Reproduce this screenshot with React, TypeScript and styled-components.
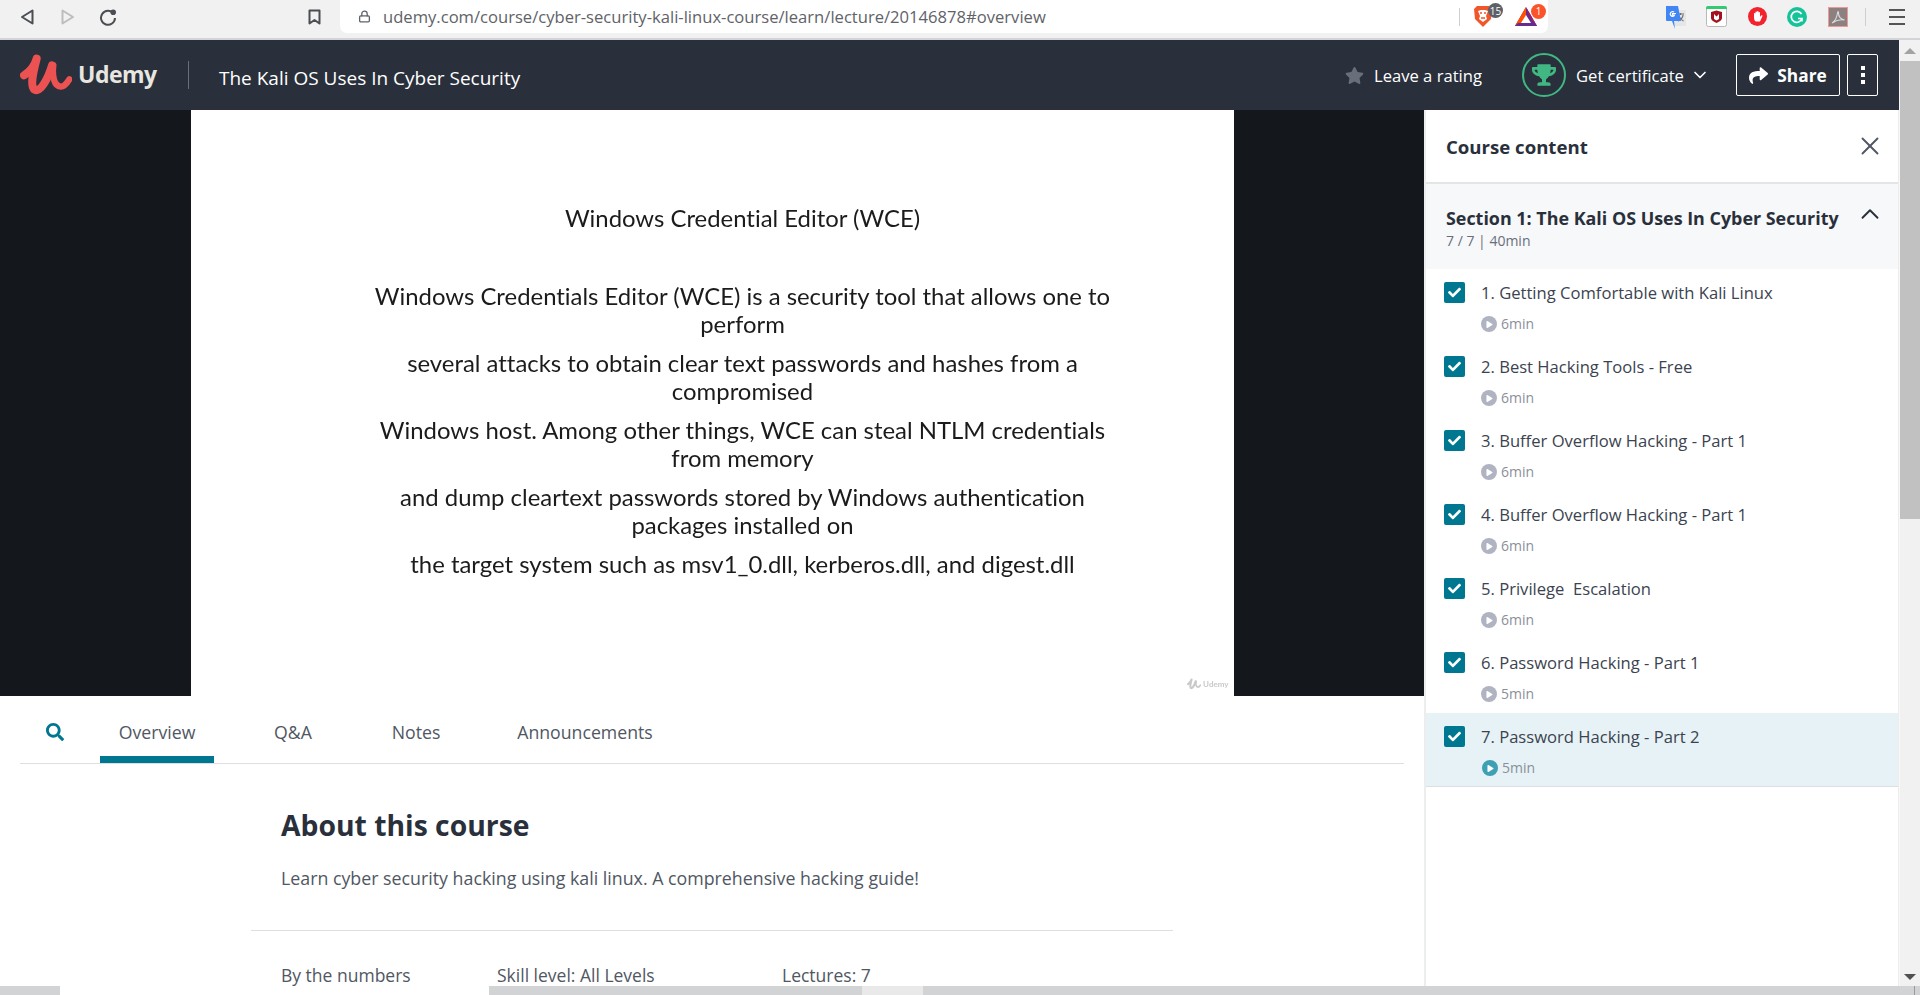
import React from "react";
import styled, { createGlobalStyle } from "styled-components";
import { FaStar, FaTrophy, FaShare, FaSearch, FaCheck, FaPlay } from "react-icons/fa";
import { ChevronDown, ChevronUp, X, Lock } from "lucide-react";

const Global = createGlobalStyle`
  html, body { margin: 0; padding: 0; height: 100%; overflow: hidden; background: #fff; }
  body { font-family: "Open Sans", "Liberation Sans", sans-serif; color: #29303b; }
  * { box-sizing: border-box; }
`;

const Frame = styled.div`display:flex;flex-direction:column;width:1920px;height:995px;overflow:hidden;`;

/* browser chrome */
const ChromeBar = styled.div`display:flex;align-items:flex-start;height:40px;flex:none;background:#f1f1f1;border-bottom:2px solid #d2d4d7;`;
const NavGroup = styled.div`display:flex;align-items:center;height:33px;width:340px;flex:none;padding-left:6px;`;
const NavSlot = styled.span<{ $w: number; $ml?: number }>`display:flex;align-items:center;justify-content:center;width:${p => p.$w}px;margin-left:${p => p.$ml ?? 0}px;`;
const Omnibox = styled.div`display:flex;align-items:center;width:1208px;height:33px;background:#fff;border-radius:0 0 7px 7px;padding-left:18px;flex:none;`;
const UrlText = styled.span`margin-left:12px;font-size:16.6px;color:#5f6368;white-space:nowrap;width:1076px;flex:none;`;
const Sep = styled.span`width:1px;height:18px;background:#cfcfcf;flex:none;`;
const ExtInBox = styled.div`position:relative;flex:none;display:flex;`;
const ExtBadge = styled.span<{ $bg: string; $left: number }>`position:absolute;top:-2px;left:${p => p.$left}px;width:15px;height:15px;border-radius:50%;background:${p => p.$bg};color:#fff;font-size:10px;display:flex;align-items:center;justify-content:center;`;
const ExtGroup = styled.div`display:flex;align-items:center;height:33px;flex:1;padding-left:117px;`;
const ExtItem = styled.span<{ $ml: number }>`display:flex;margin-left:${p => p.$ml}px;`;

/* page */
const Middle = styled.div`display:flex;flex:1;min-height:0;`;
const Page = styled.div`display:flex;flex-direction:column;width:1899px;flex:none;`;
const TopBar = styled.header`display:flex;align-items:center;height:70px;flex:none;background:#29303b;color:#fff;`;
const LogoWrap = styled.div`display:flex;align-items:center;margin-left:20px;width:168px;`;
const LogoText = styled.span`margin-left:6px;margin-top:-2px;font-size:23px;font-weight:700;letter-spacing:-.5px;color:#e8e6e1;`;
const BarDivider = styled.span`width:1px;height:28px;background:#686f7a;`;
const CourseTitle = styled.span`margin-left:30px;margin-top:6px;font-size:19px;width:1126px;white-space:nowrap;`;
const Rating = styled.div`display:flex;align-items:center;gap:10px;width:177px;font-size:16.6px;color:#fff;`;
const RatingStar = styled.span`display:flex;color:#686f7a;`;
const TrophyRing = styled.span`display:flex;align-items:center;justify-content:center;width:44px;height:44px;border:2.5px solid #41b883;border-radius:50%;color:#41b883;flex:none;`;
const Certificate = styled.span`display:flex;align-items:center;margin-left:10px;width:160px;font-size:16.6px;white-space:nowrap;`;
const CertChevron = styled.span`display:flex;margin-left:6px;`;
const ShareButton = styled.span`display:flex;align-items:center;justify-content:center;gap:9px;width:104px;height:42px;border:1px solid #fff;border-radius:2px;font-size:17.3px;font-weight:700;`;
const MoreButton = styled.span`display:flex;flex-direction:column;align-items:center;justify-content:center;gap:3px;width:31px;height:42px;margin-left:7px;border:1px solid #fff;border-radius:2px;`;
const MoreDot = styled.i`display:block;width:4px;height:4px;background:#fff;`;

const Body = styled.div`display:flex;flex:1;min-height:0;`;
const LeftCol = styled.main`display:flex;flex-direction:column;width:1424px;flex:none;overflow:hidden;`;
const Stage = styled.section`display:flex;justify-content:center;height:586px;flex:none;background:#14171c;`;
const Slide = styled.div`position:relative;width:1043px;background:#fff;padding:94px 0 0 152px;font-family:Lato,"Open Sans",sans-serif;font-variant-ligatures:none;color:#1b1b1b;text-align:center;font-size:23.9px;line-height:28px;filter:blur(.25px);`;
const SlideTitle = styled.div`width:800px;margin-bottom:50px;`;
const SlidePara = styled.div`width:800px;margin-bottom:11px;`;
const SlideLine = styled.div`white-space:nowrap;`;
const Watermark = styled.div`position:absolute;right:5px;bottom:5px;display:flex;align-items:center;gap:2px;font-size:8px;line-height:14px;font-weight:700;color:#c9c9c9;filter:blur(.7px);`;

const TabsBar = styled.nav`display:flex;align-items:stretch;height:68px;flex:none;margin:0 20px;border-bottom:1px solid #dedfe0;`;
const SearchTab = styled.span`display:flex;align-items:flex-start;padding:27px 0 0 26px;width:80px;color:#007791;`;
const Tab = styled.span<{ $active?: boolean; $w: number }>`display:flex;align-items:flex-start;justify-content:center;width:${p => p.$w}px;padding-top:24px;font-size:17.7px;line-height:24px;color:#505763;border-bottom:${p => (p.$active ? "7px solid #007791" : "0")};`;

const About = styled.section`display:flex;flex-direction:column;margin-left:251px;width:922px;`;
const AboutHead = styled.h2`margin:40px 0 0 30px;font-size:28.3px;line-height:42px;font-weight:700;color:#29303b;`;
const AboutDesc = styled.p`margin:20px 0 0 30px;font-size:17.8px;line-height:24px;color:#505763;`;
const AboutRule = styled.hr`margin:40px 0 0;border:0;border-top:1px solid #dedfe0;height:0;`;
const Numbers = styled.div`display:flex;margin:32px 0 0 30px;font-size:17.5px;line-height:24px;color:#505763;`;
const NumCell = styled.span<{ $w: number }>`width:${p => p.$w}px;flex:none;`;

const Sidebar = styled.aside`display:flex;flex-direction:column;width:475px;flex:none;background:#fff;border-left:2px solid #eceded;border-right:1px solid #eceded;`;
const SideHead = styled.div`display:flex;align-items:center;justify-content:space-between;height:74px;flex:none;padding:0 20px;border-bottom:2px solid #e4e5e6;`;
const SideTitle = styled.span`font-size:18.6px;font-weight:700;color:#29303b;`;
const CloseBtn = styled.span`display:flex;color:#505763;margin-right:-7px;`;
const Section = styled.div`display:flex;justify-content:space-between;height:85px;flex:none;padding:22px 20px 0;background:#f7f8fa;`;
const SectionTitle = styled.div`font-size:17.9px;line-height:24px;font-weight:700;color:#29303b;white-space:nowrap;`;
const SectionMeta = styled.div`margin-top:2px;font-size:14px;line-height:17px;color:#686f7a;`;
const SectionChevron = styled.span`display:flex;color:#29303b;margin:-7px -7px 0 0;height:30px;`;
const Row = styled.div<{ $active?: boolean }>`display:flex;height:74px;flex:none;padding:13px 0 0 18px;background:${p => (p.$active ? "#e6f2f5" : "#fff")};border-bottom:${p => (p.$active ? "1px solid #dedfe0" : "0")};`;
const Check = styled.span`display:flex;align-items:center;justify-content:center;width:21px;height:21px;border-radius:2px;background:#007791;color:#fff;flex:none;`;
const RowBody = styled.div`margin-left:16px;margin-top:-1px;`;
const RowTitle = styled.div`font-size:16.6px;line-height:24px;color:#3c4350;white-space:pre;`;
const RowMeta = styled.div<{ $active?: boolean }>`display:flex;align-items:center;gap:4px;margin:9px 0 0 ${p => (p.$active ? 1 : 0)}px;font-size:14px;line-height:20px;color:#8a8f99;`;
const PlayDisc = styled.span<{ $active?: boolean }>`display:flex;align-items:center;justify-content:center;width:16px;height:16px;border-radius:50%;background:${p => (p.$active ? "#3f9fb3" : "#b0b4c2")};color:#fff;padding-left:1px;`;

const PageScroll = styled.div`display:flex;flex-direction:column;align-items:stretch;width:21px;flex:none;background:#f1f1f1;border-left:1px solid #f8f8f8;`;
const ScrollArrow = styled.span<{ $down?: boolean }>`display:block;align-self:center;margin:${p => (p.$down ? "auto 0 6px" : "8px 0 6px")};width:0;height:0;border-left:6px solid transparent;border-right:6px solid transparent;${p => (p.$down ? "border-top:6px solid #505050;" : "border-bottom:6px solid #a3a3a3;")}`;
const ScrollThumb = styled.span`display:block;height:458px;margin-top:1px;background:#c1c1c1;`;

/* task strip */
const Strip = styled.footer`display:flex;height:9px;flex:none;background:#d2d3d5;overflow:hidden;`;
const StripWhite = styled.span`width:429px;margin-left:60px;background:#fff;flex:none;`;
const StripPale = styled.span`width:61px;margin-left:373px;background:#e9e9e9;flex:none;`;
const StripClock = styled.span`margin-left:869px;width:122px;font-size:13px;line-height:13px;padding-top:7px;color:#111;flex:none;`;
const StripLine = styled.span`width:1px;background:#9a9a9a;flex:none;`;

const Burger = styled.span`display:flex;flex-direction:column;gap:5px;width:16px;margin-left:23px;`;
const BurgerBar = styled.i`display:block;height:2px;background:#555;`;

const UdemyMark = ({ w = 52, h = 42, c = "#ec5252" }: { w?: number; h?: number; c?: string }) => (
  <svg width={w} height={h} viewBox="28 26 156 126" fill="none" stroke={c} strokeWidth="24" strokeLinecap="round" strokeLinejoin="round">
    <path d="M40 90C56 80 72 62 78 40C68 78 58 118 70 132C88 146 112 100 124 60" />
    <path d="M128 60C124 92 130 122 150 124C162 124 170 112 176 102" strokeWidth="19" />
  </svg>
);

const NavTriangle = ({ c, d }: { c: string; d: string }) => (
  <svg width="15" height="16" viewBox="0 0 15 16" fill="none" stroke={c} strokeWidth="2" strokeLinejoin="round">
    <path d={d} />
  </svg>
);
const Reload = () => (
  <svg width="18" height="18" viewBox="0 0 18 18" fill="none">
    <path d="M14.500 5.500A7 7 0 1 0 16 10" stroke="#4a4d52" strokeWidth="2" />
    <circle cx="14.200" cy="4.300" r="2.800" fill="#4a4d52" />
  </svg>
);
const BookmarkIcon = () => (
  <svg width="13" height="16" viewBox="0 0 13 16" fill="none" stroke="#4a4d52" strokeWidth="2" strokeLinejoin="round">
    <path d="M1.500 1.500h10v13l-5-3.500-5 3.500z" />
  </svg>
);
const Brave = () => (
  <svg width="20" height="23" viewBox="0 0 20 23">
    <path d="M4 1h12l3 3-1 10-8 8-8-8L1 4z" fill="#f1562b" />
    <path d="M5 6l3-1h4l3 1-2 5 1 3-4 3-4-3 1-3z" fill="#fff" />
    <path d="M7 8h2M11 8h2M8 13h4" stroke="#f1562b" strokeWidth="1.3" />
  </svg>
);
const Bat = () => (
  <svg width="24" height="22" viewBox="0 0 24 22">
    <path d="M12 1L1 20h22z" fill="#662d91" />
    <path d="M12 1L1 20h7l4-8z" fill="#ff5000" />
    <path d="M12 1l4 11 7 8z" fill="#9e1f63" />
    <path d="M12 9l-5 8h10z" fill="#fff" />
    <path d="M1 20h22l-3-3H4z" fill="#662d91" />
  </svg>
);
const Translate = () => (
  <svg width="21" height="24" viewBox="0 0 21 24">
    <rect x="8" y="5" width="13" height="16" rx="1" fill="#e6e6e6" />
    <path d="M12 9h7M15.500 8v2M13 16c3-1 5-4 5-6M13.500 11c1 2 3 4 5 5" stroke="#6b6b6b" strokeWidth="1.2" fill="none" />
    <path d="M1 1h12l3 15H9l1 8-3-8H2a1 1 0 0 1-1-1z" fill="#4285f4" />
    <path d="M11 8.500H7.500v1.500H9.500c-.3 1-1 1.400-1.800 1.400a2.400 2.400 0 1 1 1.400-4.300" stroke="#fff" strokeWidth="1.200" fill="none" />
  </svg>
);
const McAfee = () => (
  <svg width="21" height="21" viewBox="0 0 21 21">
    <rect x=".5" y=".5" width="20" height="20" rx="2" fill="#fff" stroke="#b9b9b9" />
    <path d="M0 2a2 2 0 0 1 2-2h17a2 2 0 0 1 2 2v1H0z" fill="#2fcc71" />
    <path d="M5 6l5.500-1.500L16 6v6c0 2-3 4-5.500 5C8 16 5 14 5 12z" fill="#a3121f" />
    <path d="M8 8v5l2.500 1.500L13 13V8l-2.500 2.500z" fill="#fff" />
  </svg>
);
const AdBlock = () => (
  <svg width="19" height="19" viewBox="0 0 19 19">
    <circle cx="9.500" cy="9.500" r="9.500" fill="#f2232d" />
    <path d="M6 10V6.500a.8.8 0 0 1 1.500 0V9V5a.8.8 0 0 1 1.500 0v4V4.500a.8.8 0 0 1 1.500 0V9V5.500a.8.8 0 0 1 1.500 0V10l1-1.500a.8.8 0 0 1 1.300 1L12 14.500H8C6.500 14.500 6 12 6 10z" fill="#fff" />
  </svg>
);
const Grammarly = () => (
  <svg width="20" height="20" viewBox="0 0 20 20">
    <circle cx="10" cy="10" r="10" fill="#15c39a" />
    <path d="M14.500 7a5.500 5.500 0 1 0 .5 4.500h-4" stroke="#fff" strokeWidth="1.700" fill="none" />
    <path d="M15 11.500v3" stroke="#fff" strokeWidth="1.500" />
  </svg>
);
const PdfIcon = () => (
  <svg width="20" height="20" viewBox="0 0 20 20">
    <rect x=".5" y=".5" width="19" height="19" fill="#8d8080" stroke="#ec9a92" />
    <path d="M4 16c3-2 5-6 5.500-10 .3-2 1-2 1 0 0 3 2 6 6 7-3-.5-8 0-12.500 3z" fill="none" stroke="#ddd" strokeWidth="1.100" />
  </svg>
);

const lectures = [
  ["1. Getting Comfortable with Kali Linux", "6min"],
  ["2. Best Hacking Tools - Free", "6min"],
  ["3. Buffer Overflow Hacking - Part 1", "6min"],
  ["4. Buffer Overflow Hacking - Part 1", "6min"],
  ["5. Privilege  Escalation", "6min"],
  ["6. Password Hacking - Part 1", "5min"],
  ["7. Password Hacking - Part 2", "5min"],
];

export default function App() {
  return (
    <Frame>
      <Global />
      <ChromeBar>
        <NavGroup>
          <NavSlot $w={42}><NavTriangle c="#4a4d52" d="M12.500 1.500v13L2 8z" /></NavSlot>
          <NavSlot $w={38}><NavTriangle c="#bdbdbd" d="M2.500 1.500v13L13 8z" /></NavSlot>
          <NavSlot $w={44}><Reload /></NavSlot>
          <NavSlot $w={13} $ml={178}><BookmarkIcon /></NavSlot>
        </NavGroup>
        <Omnibox>
          <Lock size={13} color="#5f6368" strokeWidth={2.4} />
          <UrlText>udemy.com/course/cyber-security-kali-linux-course/learn/lecture/20146878#overview</UrlText>
          <Sep />
          <ExtItem $ml={13}><ExtInBox><Brave /><ExtBadge $bg="#5e6068" $left={15}>15</ExtBadge></ExtInBox></ExtItem>
          <ExtItem $ml={21}><ExtInBox><Bat /><ExtBadge $bg="#fb542b" $left={17}>1</ExtBadge></ExtInBox></ExtItem>
        </Omnibox>
        <ExtGroup>
          <Translate />
          <ExtItem $ml={20}><McAfee /></ExtItem>
          <ExtItem $ml={21}><AdBlock /></ExtItem>
          <ExtItem $ml={20}><Grammarly /></ExtItem>
          <ExtItem $ml={21}><PdfIcon /></ExtItem>
          <ExtItem $ml={17}><Sep /></ExtItem>
          <Burger><BurgerBar /><BurgerBar /><BurgerBar /></Burger>
        </ExtGroup>
      </ChromeBar>
      <Middle>
        <Page>
          <TopBar>
            <LogoWrap><UdemyMark /><LogoText>Udemy</LogoText></LogoWrap>
            <BarDivider />
            <CourseTitle>The Kali OS Uses In Cyber Security</CourseTitle>
            <Rating><RatingStar><FaStar size={19} /></RatingStar>Leave a rating</Rating>
            <TrophyRing><FaTrophy size={24} /></TrophyRing>
            <Certificate>Get certificate<CertChevron><ChevronDown size={20} strokeWidth={2} /></CertChevron></Certificate>
            <ShareButton><FaShare size={19} />Share</ShareButton>
            <MoreButton><MoreDot /><MoreDot /><MoreDot /></MoreButton>
          </TopBar>
          <Body>
            <LeftCol>
              <Stage>
                <Slide>
                  <SlideTitle>Windows Credential Editor (WCE)</SlideTitle>
                  <SlidePara><SlideLine>Windows Credentials Editor (WCE) is a security tool that allows one to</SlideLine><SlideLine>perform</SlideLine></SlidePara>
                  <SlidePara><SlideLine>several attacks to obtain clear text passwords and hashes from a</SlideLine><SlideLine>compromised</SlideLine></SlidePara>
                  <SlidePara><SlideLine>Windows host. Among other things, WCE can steal NTLM credentials</SlideLine><SlideLine>from memory</SlideLine></SlidePara>
                  <SlidePara><SlideLine>and dump cleartext passwords stored by Windows authentication</SlideLine><SlideLine>packages installed on</SlideLine></SlidePara>
                  <SlidePara><SlideLine>the target system such as msv1_0.dll, kerberos.dll, and digest.dll</SlideLine></SlidePara>
                  <Watermark><UdemyMark w={14} h={12} c="#c9c9c9" />Udemy</Watermark>
                </Slide>
              </Stage>
              <TabsBar>
                <SearchTab><FaSearch size={18} /></SearchTab>
                <Tab $active $w={114}>Overview</Tab>
                <Tab $w={158}>Q&amp;A</Tab>
                <Tab $w={88}>Notes</Tab>
                <Tab $w={250}>Announcements</Tab>
              </TabsBar>
              <About>
                <AboutHead>About this course</AboutHead>
                <AboutDesc>Learn cyber security hacking using kali linux. A comprehensive hacking guide!</AboutDesc>
                <AboutRule />
                <Numbers>
                  <NumCell $w={216}>By the numbers</NumCell>
                  <NumCell $w={285}>Skill level: All Levels</NumCell>
                  <NumCell $w={200}>Lectures: 7</NumCell>
                </Numbers>
              </About>
            </LeftCol>
            <Sidebar>
              <SideHead>
                <SideTitle>Course content</SideTitle>
                <CloseBtn><X size={30} strokeWidth={1.5} /></CloseBtn>
              </SideHead>
              <Section>
                <div>
                  <SectionTitle>Section 1: The Kali OS Uses In Cyber Security</SectionTitle>
                  <SectionMeta>7 / 7 | 40min</SectionMeta>
                </div>
                <SectionChevron><ChevronUp size={30} strokeWidth={1.5} /></SectionChevron>
              </Section>
              {lectures.map(([t, d], i) => {
                const active = i === lectures.length - 1;
                return (
                  <Row key={t} $active={active}>
                    <Check><FaCheck size={13} /></Check>
                    <RowBody>
                      <RowTitle>{t}</RowTitle>
                      <RowMeta $active={active}>
                        <PlayDisc $active={active}><FaPlay size={7} /></PlayDisc>
                        {d}
                      </RowMeta>
                    </RowBody>
                  </Row>
                );
              })}
            </Sidebar>
          </Body>
        </Page>
        <PageScroll>
          <ScrollArrow />
          <ScrollThumb />
          <ScrollArrow $down />
        </PageScroll>
      </Middle>
      <Strip>
        <StripWhite />
        <StripPale />
        <StripClock>23:15</StripClock>
        <StripLine />
      </Strip>
    </Frame>
  );
}
